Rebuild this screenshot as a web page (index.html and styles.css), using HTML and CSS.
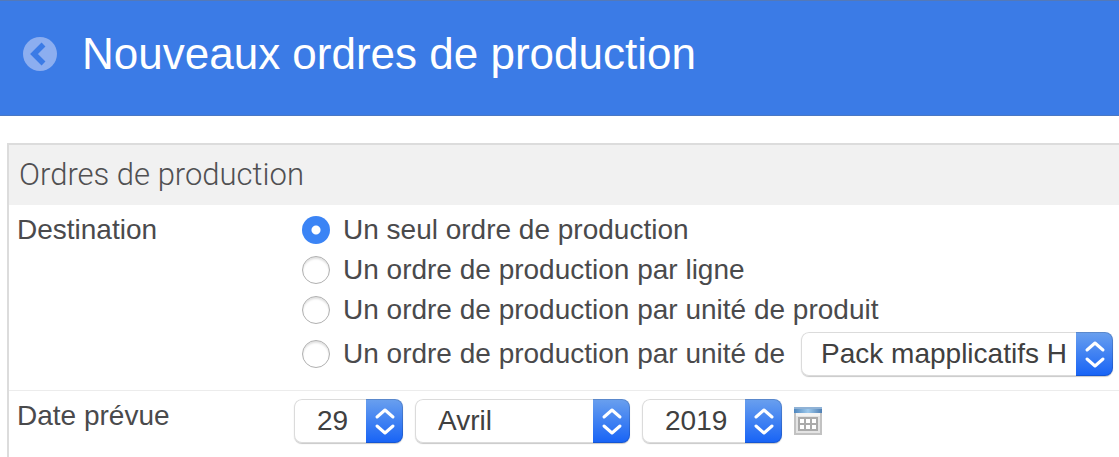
FILE: index.html
```html
<!DOCTYPE html>
<html lang="fr">
<head>
  <meta charset="UTF-8" />
  <meta name="viewport" content="width=device-width, initial-scale=1" />
  <title>Nouveaux ordres de production</title>
  <link rel="stylesheet" href="styles.css">
</head>
<body>

  <header class="header">
    <a class="back" href="#" aria-label="Retour">
      <svg width="34" height="34" viewBox="0 0 34 34">
        <circle cx="17" cy="17" r="17" fill="#8caef0" />
        <path d="M20.5 7.5 L11 17 L20.5 26.5" fill="none" stroke="#3b7be6" stroke-width="5.5" />
      </svg>
    </a>
    <h1>Nouveaux ordres de production</h1>
  </header>

  <form class="panel">
    <h2>Ordres de production</h2>

    <div class="row" role="radiogroup" aria-labelledby="destLabel">
      <div class="label" id="destLabel">Destination</div>
      <div class="choices">
        <label class="choice"><input type="radio" name="dest" checked /> Un seul ordre de production</label>
        <label class="choice"><input type="radio" name="dest" /> Un ordre de production par ligne</label>
        <label class="choice"><input type="radio" name="dest" /> Un ordre de production par unité de produit</label>
        <div class="choice-unit">
          <label class="choice"><input type="radio" name="dest" /> Un ordre de production par unité de</label>
          <select class="select-unit" aria-label="Unité">
            <option>Pack mapplicatifs H</option>
          </select>
        </div>
      </div>
    </div>

    <div class="row">
      <label class="label" for="day">Date prévue</label>
      <div class="date">
        <select id="day" class="select-day">
          <option>29</option>
        </select>
        <select class="select-month" aria-label="Mois">
          <option>Avril</option>
        </select>
        <select class="select-year" aria-label="Année">
          <option>2019</option>
        </select>
        <button type="button" class="btn-calendar" aria-label="Calendrier">
          <svg width="28" height="28" viewBox="0 0 28 28">
            <defs>
              <linearGradient id="calTop" x1="0" x2="1" y1="0" y2="0">
                <stop offset="0" stop-color="#4f86bd" />
                <stop offset="0.5" stop-color="#9cc8ec" />
                <stop offset="1" stop-color="#4f7fb3" />
              </linearGradient>
            </defs>
            <rect x="1" y="1" width="26" height="26" fill="#e4e4e4" stroke="#c2c2c2" stroke-width="2" />
            <rect width="28" height="6" fill="url(#calTop)" />
            <rect width="28" height="2" fill="#8fb2d6" />
            <rect x="2" y="6" width="24" height="3" fill="#f4f4f4" />
            <rect x="4" y="10" width="20" height="14" fill="#aaaaaa" />
            <path d="M6 12h4v4h-4z M12 12h4v4h-4z M18 12h4v4h-4z M6 18h4v4h-4z M12 18h4v4h-4z M18 18h4v4h-4z" fill="#ffffff" />
          </svg>
        </button>
      </div>
    </div>
  </form>

</body>
</html>
```

FILE: styles.css
```css
* {
  box-sizing: border-box;
}
body {
  margin: 0;
  min-height: 100vh;
  display: flex;
  flex-direction: column;
  background: #fff;
  color: #4a4a4c;
  font-family: "Helvetica Neue", "Liberation Sans", Arial, sans-serif;
  font-size: 28px;
  line-height: 40px;
}
.header {
  display: flex;
  align-items: center;
  gap: 25px;
  height: 116px;
  padding: 0 23px 8px;
  background: #3b7be6;
  border-top: 1px solid #5479b8;
  border-bottom: 1px solid #4a78c4;
}
.back {
  display: flex;
}
.header h1 {
  margin: 0;
  color: #fff;
  font-size: 44px;
  font-weight: normal;
  line-height: 52px;
}
.panel {
  flex: 1;
  margin: 27px 0 0 7px;
  border-top: 2px solid #dcdcdc;
  border-left: 2px solid #dcdcdc;
}
.panel h2 {
  margin: 0;
  padding: 0 10px;
  background: #f1f1f1;
  color: #505052;
  font-family: Roboto, "Liberation Sans", sans-serif;
  font-size: 31px;
  font-weight: 300;
  line-height: 60px;
}
.row {
  display: flex;
  padding: 5px 0 14px 8px;
}
.row + .row {
  border-top: 1px solid #ececec;
}
.label {
  flex: 0 0 277px;
}
.choices {
  padding-left: 8px;
}
.choice {
  display: flex;
  align-items: center;
  gap: 13px;
  white-space: nowrap;
}
.choice-unit {
  display: flex;
  align-items: center;
  gap: 16px;
  margin-top: 2px;
}
.choice input {
  appearance: none;
  flex: none;
  width: 28px;
  height: 28px;
  margin: 0;
  border: 1px solid #b0b0b0;
  border-radius: 50%;
  background: #fff;
  box-shadow: inset 0 2px 2px rgba(0, 0, 0, 0.12);
}
.choice input:checked {
  border: none;
  background: radial-gradient(circle, #fff 4px, #3b84f5 5px);
  box-shadow: none;
}
select {
  appearance: none;
  height: 44px;
  padding: 0 37px 0 20px;
  border: none;
  border-radius: 8px;
  color: #404040;
  font: inherit;
  background:
    url("data:image/svg+xml,%3Csvg xmlns='http://www.w3.org/2000/svg' width='37' height='44' fill='none' stroke='%23fff' stroke-width='3' stroke-linecap='round' stroke-linejoin='round'%3E%3Cpath d='M11 18l8-7 8 7M11 27l8 7 8-7'/%3E%3C/svg%3E") right / 37px 44px no-repeat,
    linear-gradient(#6aa0ee, #1763f6) right / 37px 100% no-repeat,
    #fff;
  box-shadow: inset 0 0 0 1px rgba(0, 0, 0, 0.14), 0 1px 1px rgba(0, 0, 0, 0.22);
}
.select-unit {
  width: 312px;
}
.date {
  display: flex;
  align-items: center;
  gap: 12px;
  padding-top: 3px;
}
.select-day {
  width: 109px;
  padding-left: 23px;
}
.select-month {
  width: 215px;
  padding-left: 23px;
}
.select-year {
  width: 140px;
  padding-left: 23px;
}
.btn-calendar {
  display: flex;
  padding: 0;
  border: none;
  background: none;
}
```
